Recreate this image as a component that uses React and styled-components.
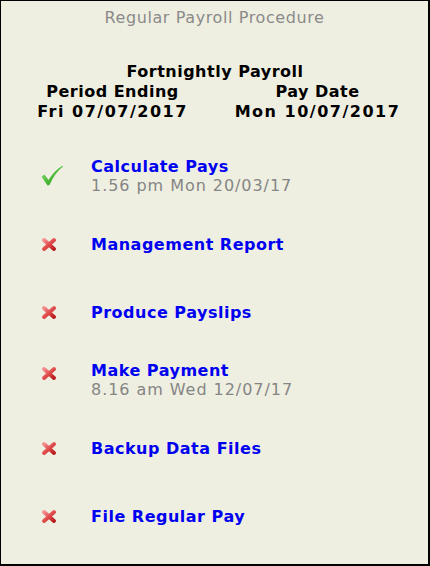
import React from "react";
import styled, { createGlobalStyle } from "styled-components";

const Global = createGlobalStyle`
  html, body { margin: 0; padding: 0; background: #efefe1; }
  body { font-family: "DejaVu Sans", Verdana, sans-serif; }
`;

const Frame = styled.div`
  box-sizing: border-box;
  width: 430px;
  height: 566px;
  background: #efefe1;
  border: 1px solid #000;
  border-right-width: 2px;
  border-bottom-width: 2px;
  display: flex;
  flex-direction: column;
`;

const Title = styled.div`
  margin-top: 7px;
  text-align: center;
  color: #8a8a8a;
  font-size: 16px;
  letter-spacing: 0.6px;
  line-height: 19px;
`;

const Header = styled.div`
  margin-top: 35px;
  padding: 0 8px 0 9px;
  font-weight: bold;
  font-size: 16px;
  line-height: 20px;
  color: #000;
  text-align: center;
  letter-spacing: 0.5px;
`;

const Dates = styled.div`
  display: grid;
  grid-template-columns: 1fr 1fr;
`;

const DateCol = styled.div`
  display: flex;
  flex-direction: column;
`;

const DateValue = styled.span`
  letter-spacing: 1.5px;
`;

const Steps = styled.div`
  margin-top: 20px;
  display: flex;
  flex-direction: column;
`;

const Row = styled.div`
  display: grid;
  grid-template-columns: 90px 1fr;
  height: 68px;
  align-items: center;
`;

const IconCell = styled.div`
  display: flex;
  padding-left: ${(p) => (p.$done ? "39px" : "40px")};
  transform: translateY(${(p) => p.$shift || 0}px);
`;

const Text = styled.div`
  display: flex;
  flex-direction: column;
  line-height: 19px;
`;

const StepLink = styled.a`
  color: #0000f0;
  font-weight: bold;
  font-size: 16px;
  letter-spacing: 0.5px;
  text-decoration: none;
  cursor: pointer;
`;

const Stamp = styled.span`
  color: #858585;
  font-size: 16px;
  letter-spacing: 0.95px;
`;

const Check = () => (
  <svg width="24" height="22" viewBox="0 0 24 22">
    <defs>
      <linearGradient id="chk" x1="0" y1="0" x2="1" y2="1">
        <stop offset="0" stopColor="#9be486" />
        <stop offset="0.55" stopColor="#48b834" />
        <stop offset="1" stopColor="#2a8422" />
      </linearGradient>
    </defs>
    <path
      d="M1.5 11.5 L4.5 9.5 L8.5 15 C12 9 17 4 22.5 0.8 L23 1.6 C17.5 6 13 12 9.5 20 L7.5 20.5 Z"
      fill="url(#chk)"
    />
  </svg>
);

const Cross = () => (
  <svg width="16" height="15" viewBox="0 0 16 15">
    <defs>
      <linearGradient id="crs" x1="0" y1="0" x2="1" y2="1">
        <stop offset="0" stopColor="#f49090" />
        <stop offset="0.5" stopColor="#e04c4c" />
        <stop offset="1" stopColor="#b81c1c" />
      </linearGradient>
    </defs>
    <g stroke="url(#crs)" strokeWidth="4" strokeLinecap="round">
      <line x1="3" y1="3" x2="13" y2="12" />
      <line x1="13" y1="3" x2="3" y2="12" />
    </g>
  </svg>
);

const steps = [
  { name: "Calculate Pays", done: true, stamp: "1.56 pm Mon 20/03/17" },
  { name: "Management Report" },
  { name: "Produce Payslips" },
  { name: "Make Payment", stamp: "8.16 am Wed 12/07/17", shift: -7 },
  { name: "Backup Data Files" },
  { name: "File Regular Pay" },
];

export default function App() {
  return (
    <>
      <Global />
      <Frame>
        <Title>Regular Payroll Procedure</Title>
        <Header>
          <div>Fortnightly Payroll</div>
          <Dates>
            <DateCol>
              <span>Period Ending</span>
              <DateValue>Fri 07/07/2017</DateValue>
            </DateCol>
            <DateCol>
              <span>Pay Date</span>
              <DateValue>Mon 10/07/2017</DateValue>
            </DateCol>
          </Dates>
        </Header>
        <Steps>
          {steps.map((s) => (
            <Row key={s.name}>
              <IconCell $done={s.done} $shift={s.shift}>
                {s.done ? <Check /> : <Cross />}
              </IconCell>
              <Text>
                <StepLink>{s.name}</StepLink>
                {s.stamp && <Stamp>{s.stamp}</Stamp>}
              </Text>
            </Row>
          ))}
        </Steps>
      </Frame>
    </>
  );
}
